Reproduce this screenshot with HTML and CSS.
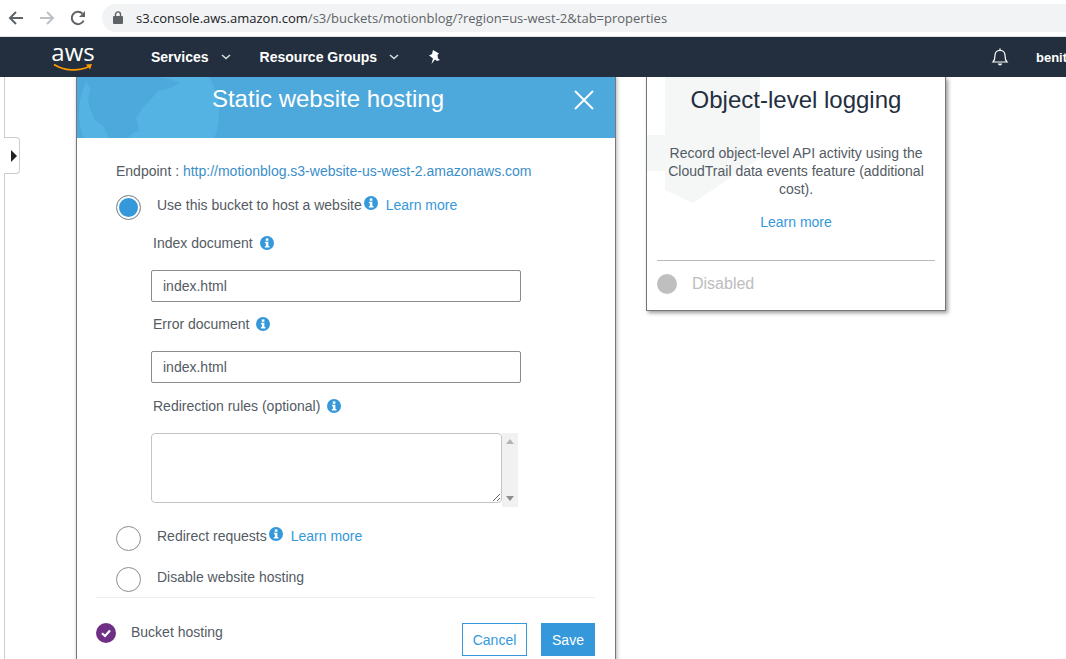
FILE: index.html
```html
<!DOCTYPE html>
<html lang="en">
<head>
  <meta charset="UTF-8" />
  <meta name="viewport" content="width=device-width, initial-scale=1" />
  <title>Static website hosting</title>
  <link rel="stylesheet" href="styles.css">
</head>
<body>

<svg class="sprites" width="0" height="0">
  <symbol id="info" viewBox="0 0 14 14">
    <circle cx="7" cy="7" r="7" fill="#3498db" />
    <rect x="5.8" y="2.4" width="2.6" height="2.4" fill="#fff" />
    <path d="M4.9 5.8h3.5v4.3h1v1.5H4.9v-1.5h1V7.3h-1z" fill="#fff" />
  </symbol>
</svg>

<div class="browser">
  <svg class="tool" width="16" height="16" viewBox="0 0 16 16"><path d="M15 8H2.5M8 2 2 8l6 6" fill="none" stroke="#5f6368" stroke-width="2" /></svg>
  <svg class="tool" width="16" height="16" viewBox="0 0 16 16"><path d="M1 8h12.5M8 2l6 6-6 6" fill="none" stroke="#bdc1c6" stroke-width="2" /></svg>
  <svg class="tool" width="16" height="16" viewBox="0 0 16 16"><path d="M13.6 10.6A6.2 6.2 0 1 1 12.4 3.6" fill="none" stroke="#5f6368" stroke-width="2" /><path d="M15 1v6H9z" fill="#5f6368" /></svg>
  <div class="address">
    <svg width="10" height="13" viewBox="0 0 10 13"><rect y="5" width="10" height="8" rx="1" fill="#5f6368" /><path d="M2.5 5.5V3.4a2.5 2.5 0 0 1 5 0v2.1" fill="none" stroke="#5f6368" stroke-width="1.4" /></svg>
    <span class="url"><b>s3.console.aws.amazon.com</b>/s3/buckets/motionblog/?region=us-west-2&amp;tab=properties</span>
  </div>
</div>

<nav class="nav">
  <div class="logo">
    <span>aws</span>
    <svg width="40" height="9" viewBox="0 0 40 9"><path d="M1 1.5C11 8 26 8.500 36 3.500" fill="none" stroke="#f90" stroke-width="1.800" /><path d="M33 1.500l6-.5-2 5.500z" fill="#f90" /></svg>
  </div>
  <a class="nav-item services">Services</a>
  <svg class="chevron" width="10" height="6" viewBox="0 0 10 6"><path d="M1 1l4 3.500L9 1" fill="none" stroke="#d5dbdb" stroke-width="1.600" /></svg>
  <a class="nav-item groups">Resource Groups</a>
  <svg class="chevron" width="10" height="6" viewBox="0 0 10 6"><path d="M1 1l4 3.500L9 1" fill="none" stroke="#d5dbdb" stroke-width="1.600" /></svg>
  <svg class="pin" width="13" height="14" viewBox="0 0 13 14"><path d="M5 0l6 3.500-1.500 1.500.5 3.500 2 1.500-3 1-2-1.500L3.500 14 5 8.500 2.500 6.500 1 5.500l3-1.500z" fill="#fff" /></svg>
  <svg class="bell" width="18" height="18" viewBox="0 0 18 18"><path d="M2 14c2-2 2-3.500 2-6.500C4 4.500 6 2.500 9 2.500s5 2 5 5c0 3 0 4.500 2 6.500z" fill="none" stroke="#fff" stroke-width="1.200" /><path d="M7 15.500a2 2 0 0 0 4 0z" fill="#fff" /><rect x="8.300" y="0.500" width="1.400" height="2" fill="#fff" /></svg>
  <span class="user">benito</span>
</nav>

<main class="stage">
  <div class="side-line"></div>
  <div class="side-handle"><i class="side-arrow"></i></div>

  <section class="modal">
    <header class="modal-head">
      <svg class="map" width="538" height="61" viewBox="0 0 538 61">
        <circle cx="72" cy="36" r="70" fill="#55b3e3" />
        <path d="M7 0l6 11-2 14 6 17 10 8 5 11h34l-4-8-3-12 8-12 8-8 6-7 12-3 10-5-11-4-11-2-7-5-14 0-6-5z" fill="#4da8dc" />
        <path d="M51 61l6-6 10-2 5 4 2 4z" fill="#55b3e3" />
      </svg>
      <h2 class="modal-title">Static website hosting</h2>
      <svg class="close" width="22" height="22" viewBox="0 0 22 22"><path d="M2 2l18 18M20 2 2 20" stroke="#fff" stroke-width="1.800" fill="none" /></svg>
    </header>

    <div class="modal-body">
      <p class="endpoint">Endpoint : <a class="endpoint-link">http://motionblog.s3-website-us-west-2.amazonaws.com</a></p>

      <div class="radio-row first">
        <span class="radio checked"></span>
        <span class="radio-text">Use this bucket to host a website</span>
        <svg class="info tight"><use href="#info" /></svg>
        <a class="link">Learn more</a>
      </div>

      <div class="field">
        <label class="field-label index-label">Index document <svg class="info"><use href="#info" /></svg></label>
        <input class="text-input" type="text" value="index.html">
      </div>
      <div class="field">
        <label class="field-label error-label">Error document <svg class="info"><use href="#info" /></svg></label>
        <input class="text-input" type="text" value="index.html">
      </div>
      <div class="field">
        <label class="field-label rules-label">Redirection rules (optional) <svg class="info"><use href="#info" /></svg></label>
        <div class="rules">
          <textarea class="rules-input"></textarea>
          <div class="fake-scroll"><i class="arrow-up"></i><i class="arrow-down"></i></div>
        </div>
      </div>

      <div class="radio-row redirect">
        <span class="radio"></span>
        <span class="radio-text">Redirect requests</span>
        <svg class="info tight"><use href="#info" /></svg>
        <a class="link">Learn more</a>
      </div>
      <div class="radio-row disable">
        <span class="radio"></span>
        <span class="radio-text">Disable website hosting</span>
      </div>

      <footer class="modal-foot">
        <svg class="check" width="20" height="20" viewBox="0 0 20 20"><circle cx="10" cy="10" r="10" fill="#6f2f86" /><path d="M6 10.200l3 2.800 5-5.500" fill="none" stroke="#fff" stroke-width="2.200" /></svg>
        <span class="foot-text">Bucket hosting</span>
        <button class="btn btn-cancel">Cancel</button>
        <button class="btn btn-save">Save</button>
      </footer>
    </div>
  </section>

  <section class="card">
    <svg class="watermark" width="114" height="127" viewBox="0 0 114 127"><path d="M0 0h113v81L46 126l-28-13V58H0V36h18V0z" fill="#f5f7f7" /><rect x="0" y="58" width="18" height="36" fill="#f5f7f7" /><rect x="0" y="36" width="18" height="22" fill="#fff" /></svg>
    <h2 class="card-title">Object-level logging</h2>
    <p class="card-text">Record object-level API activity using the CloudTrail data events feature (additional cost).</p>
    <a class="link card-link">Learn more</a>
    <div class="card-status">
      <span class="status-dot"></span>
      <span class="status-text">Disabled</span>
    </div>
  </section>
</main>

</body>
</html>
```

FILE: styles.css
```css
* {
  box-sizing: border-box;
}
html, body {
  height: 100%;
}
body {
  margin: 0;
  overflow: hidden;
  background: #fff;
  font-family: 'Liberation Sans', Arial, sans-serif;
  font-size: 14px;
  color: #545b64;
}
.sprites {
  position: absolute;
}

/* browser chrome */
.browser {
  height: 37px;
  display: flex;
  align-items: center;
  padding: 0 0 1px 8px;
  border-bottom: 1px solid #dee1e6;
}
.tool {
  margin-right: 15px;
  flex: none;
}
.address {
  flex: 1;
  height: 28px;
  margin-left: 1px;
  background: #f1f3f4;
  border-radius: 14px 0 0 14px;
  display: flex;
  align-items: center;
  padding-left: 11px;
}
.url {
  margin-left: 13px;
  font-family: 'Open Sans', sans-serif;
  font-size: 13px;
  color: #5f6368;
  white-space: nowrap;
}
.url b {
  font-weight: 400;
  color: #202124;
}

/* aws nav */
.nav {
  height: 40px;
  background: #232f3e;
  display: flex;
  align-items: center;
  position: relative;
  overflow: hidden;
  padding-left: 53px;
}
.logo {
  width: 40px;
  height: 36px;
  display: flex;
  flex-direction: column;
  align-items: center;
}
.logo span {
  font-family: 'Open Sans', sans-serif;
  font-size: 24px;
  line-height: 26px;
  color: #fff;
}
.logo svg {
  margin-top: -2px;
}
.nav-item {
  color: #fff;
  font-weight: 700;
  font-size: 14px;
}
.services {
  margin-left: 58px;
}
.groups {
  margin-left: 29px;
}
.chevron {
  margin-left: 12px;
}
.pin {
  margin-left: 29px;
}
.bell {
  margin-left: auto;
}
.user {
  margin-left: 27px;
  margin-right: -10px;
  width: 40px;
  color: #fff;
  font-size: 13px;
  font-weight: 700;
}

/* page */
.stage {
  height: 582px;
  display: flex;
  align-items: flex-start;
  padding-left: 76px;
  gap: 30px;
  position: relative;
  overflow: hidden;
}
.side-line {
  position: absolute;
  left: 4px;
  top: 0;
  bottom: 0;
  width: 1px;
  background: #ccc;
}
.side-handle {
  position: absolute;
  left: 4px;
  top: 60px;
  width: 16px;
  height: 37px;
  background: #fff;
  border: 1px solid #ccc;
  border-left: 0;
  border-radius: 0 4px 4px 0;
}
.side-arrow {
  position: absolute;
  left: 7px;
  top: 12px;
  border-style: solid;
  border-width: 6px 0 6px 6px;
  border-color: transparent transparent transparent #222;
}

/* modal */
.modal {
  width: 540px;
  flex: none;
  height: 600px;
  background: #fff;
  border-left: 1px solid #777;
  border-right: 1px solid #777;
  box-shadow: 1px 0 4px rgba(0, 0, 0, 0.3);
}
.modal-head {
  height: 61px;
  background: #4da8dc;
  position: relative;
  overflow: hidden;
  display: flex;
  justify-content: center;
}
.map {
  position: absolute;
  left: 0;
  top: 0;
}
.modal-title {
  position: relative;
  margin: 6px 36px 0 0;
  font-size: 24px;
  line-height: 32px;
  font-weight: 400;
  color: #fff;
}
.close {
  position: absolute;
  right: 20px;
  top: 12px;
}
.modal-body {
  padding-top: 24px;
}
.endpoint {
  margin: 0 0 0 39px;
  line-height: 18px;
}
.endpoint-link {
  color: #3b8fc9;
}
.link {
  color: #3498db;
}
.radio-row {
  display: flex;
  align-items: flex-start;
  margin-left: 39px;
}
.radio-row.first {
  margin-top: 15px;
}
.radio-row.redirect {
  margin-top: 19px;
}
.radio-row.disable {
  margin-top: 16px;
}
.radio {
  width: 25px;
  height: 25px;
  flex: none;
  border-radius: 50%;
  border: 1px solid #8d8d8d;
  background: #fff;
  margin-right: 16px;
}
.radio.checked {
  background: #3498db;
  box-shadow: inset 0 0 0 2px #fff;
}
.radio-text {
  line-height: 20px;
}
.radio-row .link {
  line-height: 20px;
  margin-left: 8px;
}
.info {
  width: 14px;
  height: 14px;
  margin-left: 3px;
  vertical-align: -2px;
}
.info.tight {
  margin-left: 2px;
  margin-top: 1px;
  flex: none;
}
.field {
  margin-left: 74px;
}
.field-label {
  display: block;
  margin-left: 2px;
  line-height: 18px;
}
.index-label {
  margin-top: 14px;
}
.error-label {
  margin-top: 13px;
}
.rules-label {
  margin-top: 14px;
}
.text-input {
  display: block;
  width: 370px;
  height: 32px;
  margin-top: 18px;
  padding: 0 11px;
  border: 1px solid #8c8c8c;
  border-radius: 2px;
  font-family: inherit;
  font-size: 14px;
  color: #545b64;
  outline: none;
}
.rules {
  display: flex;
  align-items: flex-start;
  margin-top: 18px;
}
.rules-input {
  display: block;
  width: 351px;
  height: 70px;
  border: 1px solid #c4c4c4;
  border-radius: 4px;
  overflow: hidden;
  outline: none;
}
.fake-scroll {
  width: 16px;
  height: 74px;
  background: #f1f1f1;
  display: flex;
  flex-direction: column;
  justify-content: space-between;
  align-items: center;
  padding: 6px 0;
}
.arrow-up {
  border-style: solid;
  border-width: 0 4px 5px 4px;
  border-color: transparent transparent #b5b5b5 transparent;
}
.arrow-down {
  border-style: solid;
  border-width: 5px 4px 0 4px;
  border-color: #8f8f8f transparent transparent transparent;
}
.modal-foot {
  margin: 5px 20px 0 19px;
  padding-top: 25px;
  border-top: 1px solid #eee;
  display: flex;
  align-items: flex-start;
}
.check {
  flex: none;
}
.foot-text {
  margin-left: 15px;
  line-height: 18px;
}
.btn {
  height: 33px;
  font-family: inherit;
  font-size: 14px;
  padding: 0;
}
.btn-cancel {
  width: 65px;
  margin-left: auto;
  background: #fff;
  border: 1px solid #3498db;
  color: #3498db;
}
.btn-save {
  width: 54px;
  margin-left: 14px;
  background: #3498db;
  border: 0;
  color: #fff;
}

/* side card */
.card {
  width: 300px;
  height: 234px;
  flex: none;
  position: relative;
  overflow: hidden;
  background: #fff;
  border: 1px solid #777;
  border-top: 0;
  box-shadow: 2px 2px 4px rgba(0, 0, 0, 0.4);
  display: flex;
  flex-direction: column;
  align-items: center;
  padding: 0 10px;
}
.watermark {
  position: absolute;
  left: 0;
  top: 0;
}
.card-title {
  position: relative;
  margin: 7px 0 0;
  font-size: 24px;
  line-height: 32px;
  font-weight: 400;
  color: #232f3e;
}
.card-text {
  position: relative;
  margin: 28px 0 0;
  width: 262px;
  line-height: 18px;
  text-align: center;
}
.card-link {
  position: relative;
  margin-top: 15px;
  line-height: 18px;
}
.card-status {
  align-self: stretch;
  margin-top: 29px;
  padding-top: 13px;
  border-top: 1px solid #bbb;
  display: flex;
  align-items: center;
}
.status-dot {
  width: 20px;
  height: 20px;
  border-radius: 50%;
  background: #bfbfbf;
}
.status-text {
  margin-left: 15px;
  font-size: 16px;
  color: #bdbdbd;
}
```
